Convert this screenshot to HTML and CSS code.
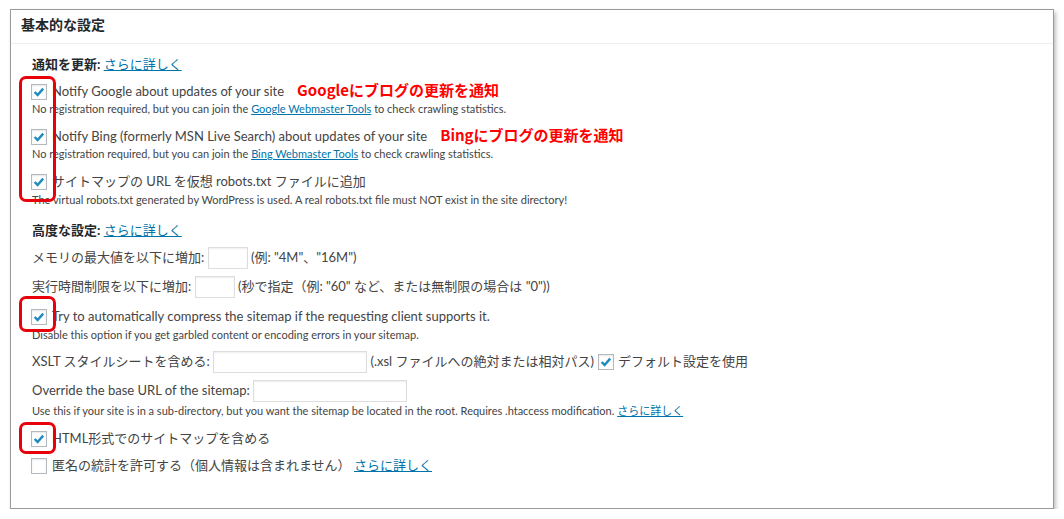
FILE: index.html
```html
<!DOCTYPE html>
<html lang="ja">
<head>
    <meta charset="utf8"/>
    <title>基本的な設定</title>
    <link rel="stylesheet" href="styles.css">
</head>
<body>
<div class="postbox">
    <h3 class="hndle">基本的な設定</h3>
    <div class="inside">
        <p class="group-title"><b>通知を更新:</b> <a href="#">さらに詳しく</a></p>

        <label class="opt"><span class="cb checked"></span>Notify Google about updates of your site<span class="note">Googleにブログの更新を通知</span></label>
        <p class="desc">No registration required, but you can join the <a href="#">Google Webmaster Tools</a> to check crawling statistics.</p>

        <label class="opt"><span class="cb checked"></span>Notify Bing (formerly MSN Live Search) about updates of your site<span class="note">Bingにブログの更新を通知</span></label>
        <p class="desc">No registration required, but you can join the <a href="#">Bing Webmaster Tools</a> to check crawling statistics.</p>

        <label class="opt gap8"><span class="cb checked"></span>サイトマップの URL を仮想 robots.txt ファイルに追加</label>
        <p class="desc">The virtual robots.txt generated by WordPress is used. A real robots.txt file must NOT exist in the site directory!</p>

        <p class="group-title gap11"><b>高度な設定:</b> <a href="#">さらに詳しく</a></p>

        <div class="opt field-row gap5">メモリの最大値を以下に増加: <span class="field small"></span> (例: "4M"、"16M")</div>
        <div class="opt field-row">実行時間制限を以下に増加: <span class="field small"></span> (秒で指定（例: "60" など、または無制限の場合は "0"))</div>

        <label class="opt gap9"><span class="cb checked"></span>Try to automatically compress the sitemap if the requesting client supports it.</label>
        <p class="desc">Disable this option if you get garbled content or encoding errors in your sitemap.</p>

        <div class="opt field-row gap6">XSLT スタイルシートを含める: <span class="field wide"></span> (.xsl ファイルへの絶対または相対パス)<span class="cb checked inline"></span>デフォルト設定を使用</div>
        <div class="opt field-row">Override the base URL of the sitemap: <span class="field wide"></span></div>
        <p class="desc gap1">Use this if your site is in a sub-directory, but you want the sitemap be located in the root. Requires .htaccess modification. <a href="#">さらに詳しく</a></p>

        <label class="opt gap8"><span class="cb checked"></span>HTML形式でのサイトマップを含める</label>
        <label class="opt"><span class="cb"></span>匿名の統計を許可する（個人情報は含まれません） <a href="#">さらに詳しく</a></label>

        <!-- red marks drawn over the screenshot -->
        <div class="mark mark-notify"></div>
        <div class="mark mark-compress"></div>
        <div class="mark mark-html"></div>
    </div>
</div>
</body>
</html>
```

FILE: styles.css
```css
body {
    margin: 0;
    padding: 9px 10px 0 10px;
    background: #fff;
    font-family: "Lato", "Noto Sans CJK JP", sans-serif;
    font-size: 13px;
    color: #444;
}

a {
    color: #0073aa;
    text-decoration: underline;
}

.postbox {
    position: relative;
    width: 1042px;
    height: 498px;
    border: 1px solid #9a9a9a;
    background: #fff;
    box-shadow: 2px 3px 4px rgba(0, 0, 0, 0.25);
}

.hndle {
    margin: 0;
    height: 33px;
    line-height: 30px;
    padding: 0 10px;
    font-size: 14px;
    font-weight: bold;
    color: #23282d;
    border-bottom: 1px solid #eee;
}

.inside {
    padding: 10px 21px 0 21px;
}

.group-title {
    margin: 0;
    height: 20px;
    line-height: 20px;
    white-space: nowrap;
}

.group-title b {
    color: #23282d;
}

.opt {
    display: block;
    margin-top: 7px;
    height: 20px;
    line-height: 20px;
    white-space: nowrap;
}

.field-row {
    height: 22px;
    line-height: 22px;
}

.group-title + .opt {
    margin-top: 6px;
}

.desc {
    margin: 0;
    height: 18px;
    line-height: 18px;
    font-size: 11px;
    white-space: nowrap;
}

.gap1 { margin-top: 1px; }
.gap5 { margin-top: 5px; }
.gap6 { margin-top: 6px; }
.gap8 { margin-top: 8px; }
.gap9 { margin-top: 9px; }
.gap11 { margin-top: 11px; }

.cb {
    display: inline-block;
    vertical-align: middle;
    box-sizing: border-box;
    width: 16px;
    height: 16px;
    margin: -2px 5px 0 -1px;
    border: 1px solid #b4b9be;
    background: #fff;
    box-shadow: inset 0 1px 2px rgba(0, 0, 0, 0.1);
}

.cb.checked {
    background: #fff url("data:image/svg+xml;utf8,<svg xmlns='http://www.w3.org/2000/svg' viewBox='0 0 16 16'><path d='M3 8 L6.4 11.4 L12.8 4.2' fill='none' stroke='%231e8cbe' stroke-width='2.8'/></svg>") center / 14px 14px no-repeat;
}

.cb.inline {
    margin: -2px 4px 0 4px;
}

.field {
    display: inline-block;
    vertical-align: middle;
    box-sizing: border-box;
    height: 22px;
    margin-top: -2px;
    border: 1px solid #ddd;
    box-shadow: inset 0 1px 2px rgba(0, 0, 0, 0.07);
    background: #fff;
}

.field.small {
    width: 40px;
}

.field.wide {
    width: 154px;
}

.note {
    margin-left: 13px;
    color: #f00;
    font-family: "Noto Sans CJK JP", sans-serif;
    font-weight: bold;
    font-size: 15px;
}

.mark {
    position: absolute;
    left: 8px;
    width: 31px;
    border: 3px solid #e8000b;
    border-radius: 7px;
}

.mark-notify {
    top: 66px;
    height: 120px;
}

.mark-compress {
    top: 286px;
    height: 30px;
}

.mark-html {
    top: 412px;
    height: 26px;
}
```
